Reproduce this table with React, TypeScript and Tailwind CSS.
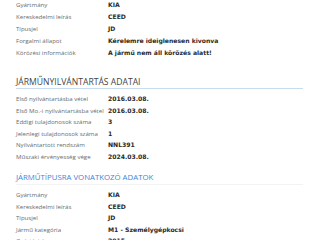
const TOP = [
  { k: "Gyártmány", v: "KIA" },
  { k: "Kereskedelmi leírás", v: "CEED" },
  { k: "Típusjel", v: "JD" },
  { k: "Forgalmi állapot", v: "Kérelemre ideiglenesen kivonva" },
  { k: "Körözési információk", v: "A jármű nem áll körözés alatt!" },
];

const REG = [
  { k: "Első nyilvántartásba vétel", v: "2016.03.08." },
  { k: "Első Mo.-i nyilvántartásba vétel", v: "2016.03.08." },
  { k: "Eddigi tulajdonosok száma", v: "3" },
  { k: "Jelenlegi tulajdonosok száma", v: "1" },
  { k: "Nyilvántartott rendszám", v: "NNL391" },
  { k: "Műszaki érvényesség vége", v: "2024.03.08." },
];

const TYPE = [
  { k: "Gyártmány", v: "KIA" },
  { k: "Kereskedelmi leírás", v: "CEED" },
  { k: "Típusjel", v: "JD" },
  { k: "Jármű kategória", v: "M1 - Személygépkocsi" },
  { k: "Gyártási év", v: "2015" },
];

function Row({ k, v, tight }: { k: string; v: string; tight?: boolean }) {
  return (
    <div className={tight ? "flex h-[11.5px] items-center" : "flex h-[12.2px] items-center"}>
      <div className="w-[92px] shrink-0 text-[6.1px] text-[#6b6b6b]">{k}</div>
      <div className="whitespace-nowrap font-['DejaVu_Sans',sans-serif] text-[6.1px] font-bold text-[#2a2a2a]">
        {v}
      </div>
    </div>
  );
}

export default function App() {
  return (
    <div className="h-[240px] w-[320px] overflow-hidden bg-white px-[16px] font-['Open_Sans',sans-serif]">
      <div className="-mt-[2px]">
        {TOP.map((r) => (
          <Row key={r.k + r.v} {...r} />
        ))}
      </div>

      <h2 className="mt-[18px] w-[287px] border-b border-[#c9dbef] pb-[1px] text-[8.6px] leading-[10px] text-[#444]">
        JÁRMŰNYILVÁNTARTÁS ADATAI
      </h2>
      <div className="mt-[4px]">
        {REG.map((r) => (
          <Row key={r.k} tight {...r} />
        ))}
      </div>

      <h2 className="mt-[10px] w-[287px] border-b border-[#f3f3f3] pb-[2px] text-[7.8px] leading-[10px] text-[#3f86d8]">
        JÁRMŰTÍPUSRA VONATKOZÓ ADATOK
      </h2>
      <div className="mt-[4px]">
        {TYPE.map((r) => (
          <Row key={r.k + r.v} tight {...r} />
        ))}
      </div>
    </div>
  );
}
